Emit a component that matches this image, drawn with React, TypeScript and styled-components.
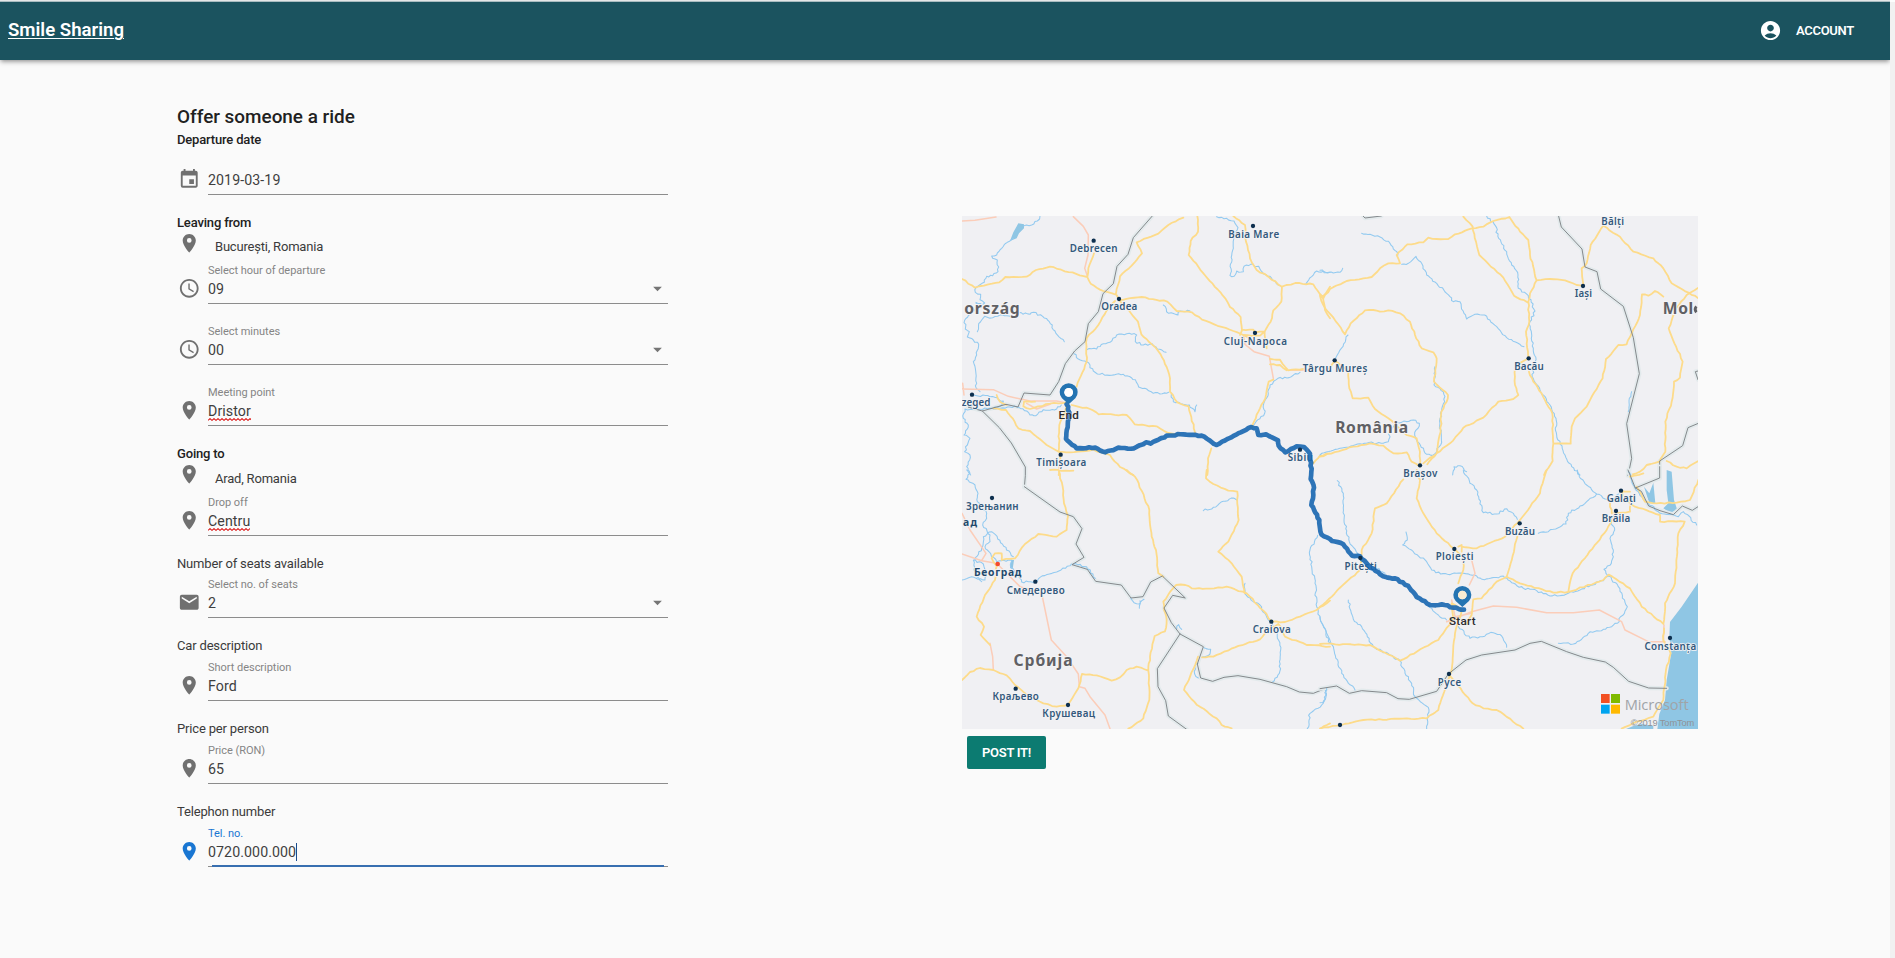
import React from "react";
import styled, { createGlobalStyle, css } from "styled-components";
import { MdAccessTime, MdAccountCircle, MdArrowDropDown, MdEmail, MdEvent, MdPlace } from "react-icons/md";

const GlobalStyle = createGlobalStyle`
  * { box-sizing: border-box; }
  body { margin: 0; background: #fafafa; font-family: Roboto, sans-serif; color: #212121; }
`;

const Page = styled.div`
  height: 958px;
  width: 1895px;
  overflow: hidden;
  display: grid;
  grid-template-columns: 1890px 5px;
`;
const Content = styled.div`
  display: flex;
  flex-direction: column;
`;
const ScrollGutter = styled.div`
  background: #f1f1f1;
  border-top: 2px solid #fdfdfd;
`;
const Header = styled.header`
  height: 60px;
  flex: none;
  border-top: 1px solid #e4e6e7;
  box-shadow: inset 0 1px #a9bcc0, 0 2px 4px -1px rgba(0, 0, 0, 0.35), 0 3px 5px rgba(0, 0, 0, 0.12);
  background: #1b535f;
  color: #fff;
  display: flex;
  align-items: center;
  justify-content: space-between;
  padding: 0 36px 1px 8px;
`;
const Brand = styled.a`
  font-size: 18.6px;
  font-weight: 600;
  text-decoration: underline;
  text-decoration-thickness: 1px;
  text-underline-offset: 2px;
`;
const Account = styled.div`
  display: flex;
  align-items: center;
  gap: 14px;
  font-size: 13px;
  font-weight: 600;
  letter-spacing: -0.3px;
`;
const Main = styled.main`
  display: flex;
  align-items: flex-start;
  padding: 45px 0 0 177px;
`;
const Form = styled.form`
  width: 491px;
  margin-right: 294px;
`;
const Title = styled.h1`
  margin: 0;
  font-size: 18.9px;
  line-height: 24px;
  height: 25px;
  font-weight: 500;
`;
const Section = styled.section`
  margin-bottom: 18px;
`;
const Heading = styled.h2<{ $strong?: boolean }>`
  margin: 0;
  font-size: 13px;
  line-height: 20px;
  font-weight: ${(p) => (p.$strong ? 500 : 400)};
  letter-spacing: -0.17px;
  color: ${(p) => (p.$strong ? "#212121" : "#3b3b3b")};
`;
const IconSlot = styled.span`
  width: 31px;
  flex: none;
  display: flex;
  padding-left: 1px;
  font-size: 22.5px;
  color: #707070;
`;
const Place = styled.div<{ $height: number }>`
  display: flex;
  height: ${(p) => p.$height}px;
  font-size: 13px;
  letter-spacing: -0.2px;
  color: #3b3b3b;
  ${IconSlot} { padding-top: 0; margin-top: -1px; }
`;
const PlaceName = styled.span<{ $height: number }>`
  padding-left: 7px;
  line-height: ${(p) => p.$height * 2 - 31}px;
`;
const FieldRow = styled.div<{ $gap?: number; $focused?: boolean }>`
  display: flex;
  height: 42px;
  margin-top: ${(p) => p.$gap ?? 0}px;
  ${IconSlot} {
    padding-top: 15px;
    ${(p) => p.$focused && css`color: #1976d2;`}
  }
`;
const FieldBody = styled.div<{ $focused?: boolean }>`
  flex: 1;
  position: relative;
  border-bottom: 1px solid #8c8c8c;
  ${(p) =>
    p.$focused &&
    css`
      &::after {
        content: "";
        position: absolute;
        left: 4px;
        right: 4px;
        bottom: -1px;
        height: 2px;
        background: #386fb0;
      }
    `}
`;
const FieldLabel = styled.div<{ $focused?: boolean }>`
  height: 16px;
  line-height: 18px;
  font-size: 11px;
  letter-spacing: -0.03px;
  color: ${(p) => (p.$focused ? "#1976d2" : "#858585")};
`;
const ValueRow = styled.div`
  height: 22px;
  display: flex;
  align-items: center;
  justify-content: space-between;
  font-size: 14.2px;
  letter-spacing: 0.08px;
  color: #3f3f3f;
`;
const Value = styled.span`
  position: relative;
  line-height: 18px;
`;
const Squiggle = styled.svg`
  position: absolute;
  left: 0;
  bottom: -1px;
  width: 100%;
  height: 3px;
`;
const Caret = styled.span`
  display: inline-block;
  width: 1px;
  height: 18px;
  background: #1a4c8c;
  vertical-align: top;
`;
const DropArrow = styled.span`
  display: flex;
  margin-top: -2px;
  font-size: 21px;
  color: #757575;
`;
const MapColumn = styled.div`
  width: 736px;
  padding-top: 111px;
`;
const MapSvg = styled.svg`
  display: block;
  width: 736px;
  height: 513px;
  background: #f0f0f3;
`;
const PostButton = styled.button`
  margin: 7px 0 0 5px;
  width: 79px;
  height: 33px;
  border: 0;
  border-radius: 2px;
  background: #0c7b71;
  color: #fff;
  font: 600 13px Roboto, sans-serif;
  letter-spacing: -0.25px;
  padding: 0;
`;

type FieldProps = {
  icon: React.ReactNode;
  label?: string;
  value: string;
  select?: boolean;
  misspelled?: boolean;
  focused?: boolean;
  gap?: number;
};
const zigzag = Array.from({ length: 60 }, (_, i) => `${i * 2},${i % 2 ? 0.6 : 2.4}`).join(" ");

function Field({ icon, label, value, select, misspelled, focused, gap }: FieldProps) {
  return (
    <FieldRow $gap={gap} $focused={focused}>
      <IconSlot>{icon}</IconSlot>
      <FieldBody $focused={focused}>
        <FieldLabel $focused={focused}>{label}</FieldLabel>
        <ValueRow>
          <Value>
            {value}
            {focused && <Caret />}
            {misspelled && (
              <Squiggle>
                <polyline points={zigzag} fill="none" stroke="#dd2222" strokeWidth="1.1" />
              </Squiggle>
            )}
          </Value>
          {select && <DropArrow><MdArrowDropDown /></DropArrow>}
        </ValueRow>
      </FieldBody>
    </FieldRow>
  );
}

/* Map geometry: three units per pixel, in four quadrants. */
type Quad = { dx: number; dy: number; rivers: string[]; roads: string[]; motorways: string[]; borders: string[]; water?: string[] };
const quads: Quad[] = [
  {
    dx: 0,
    dy: 0,
    water: ["M180 108L190 82L205 55L222 58L222 70L207 85L200 100Z"],
    rivers: [
      "M270 33L262 48L245 60L222 62M190 100L172 112L155 130L140 150L125 153L128 160L142 165L144 200L128 212L110 214L103 232L78 248L76 262L92 268L90 284L104 294L96 300L78 292L76 312L62 328L44 346L46 372L58 380L52 396L70 405L86 418L80 450L70 470L77 498L79 550L90 560",
      "M82 380L86 356L104 334L128 338L150 330L190 336L205 324L240 328L250 322L278 334L298 350L315 378L343 410",
      "M410 434L440 432L460 416L480 412L500 390L530 386L560 390L556 410L580 420L606 416L622 432L648 442",
      "M372 446L385 462L410 470L430 498L450 508L520 508L556 524L566 546L590 552L610 565L656 562M664 568L670 590L700 598L718 600L735 620L740 600",
      "M130 612L180 606L200 606L230 618L240 630L258 632L280 614L320 612L334 600",
      "M70 570L120 575L160 588L150 604L120 610L90 614L45 612L40 640L55 660L42 690L60 700L44 740L60 750L50 785L62 810",
      "M800 35L830 40L852 48L864 68L852 90L850 130L840 212L852 214L860 198L880 200L882 184L902 178L926 184L940 206L960 214L985 240",
      "M1068 236L1085 215L1100 198L1140 202",
      "M640 300L656 325L684 330L690 318L720 318",
      "M1050 502L1024 515L984 520L960 540L954 572L940 600L944 625L918 650L900 668",
    ],
    roads: [
      "M36 222L75 248L115 238L148 232L166 216L230 215L258 195L300 185L412 216L422 236L460 258L500 270L507 285L575 276L652 290L680 318L726 322L756 344L850 378L880 390L900 400",
      "M432 145L415 190L412 216",
      "M700 38L655 60L625 86L560 112L576 145L545 182L510 214L504 240L498 265",
      "M742 33L744 80L722 108L716 150L745 185L788 236L832 290L840 306L872 336L876 376L870 390",
      "M850 33L885 60L888 110L900 160L920 195L955 215L996 245L994 290L970 316L962 350L944 380L946 410L950 430",
      "M996 245L1036 234L1090 238L1118 275L1140 245M1118 275L1125 315L1140 340",
      "M876 374L910 374L915 382L944 380M880 390L930 392L944 380",
      "M495 288L470 316L445 360L410 400L410 470L380 545",
      "M507 285L544 326L564 350L574 388L606 418L632 448L650 486L660 520L660 560L682 592L716 604L724 636L735 682",
      "M365 600L420 612L446 628L530 630L554 658L620 664L655 684L690 690",
      "M350 592L300 596L240 612L220 604L222 590L255 590M350 602L328 660L326 740L333 748M330 748L326 810",
      "M130 610L168 615L188 640L205 670L240 678L290 720L326 740M326 740L360 742L430 734L480 750L510 786L550 810",
      "M960 462L990 464L1015 496L1060 492M960 478L990 480L1010 496M970 524L956 530L946 580L930 610L912 650L905 668",
      "M784 730L774 760L772 810M140 570L150 590L170 600",
      "M1090 775L1110 752L1140 745",
    ],
    motorways: ["M36 48L75 46L138 36M370 35L400 64L415 90L414 150L404 190L412 212", "M36 552L130 554L175 574L240 588L320 588L348 594M38 535L42 570M880 390L885 418L912 440L958 454L970 520", "M1020 496L1080 495M230 595L260 612L300 598"],
    borders: ["M606 34L550 98L534 148L501 184L490 236L459 266L445 320L415 356L405 410L374 438L346 476L326 530L300 570L222 564L204 606L168 598L97 618L54 606L70 600M97 618L148 668L184 714L226 786L226 812L223 847"],
  },
  {
    dx: 1110,
    dy: 0,
    rivers: [
      "M0 196L20 203L60 202L68 190M125 85L150 88L180 96L210 115L230 140L233 152",
      "M245 178L265 175L288 154L302 170L320 210L350 235L390 275L400 290L420 290L432 325L440 342L465 328L494 330L530 365L560 398L612 425",
      "M500 33L526 62L536 100L560 140L575 180L594 210L595 250L625 272L645 318L630 350L634 400L640 430L648 478L636 508L660 555L690 600L708 640L710 690L735 750",
      "M84 390L64 430L45 462M345 485L342 540L370 560L374 590L360 640L362 720L340 750L320 748L292 710L284 690L298 655L280 645L230 652L210 680L205 710L140 715L60 730L0 750",
      "M398 810L402 785L420 782L440 800M735 750L755 785L780 810",
      "M925 620L928 580L935 560",
    ],
    roads: [
      "M0 270L10 280L30 252L80 228L155 216L180 190L205 175L240 175L230 150L262 118L310 112L325 98L350 102L385 102L405 88L456 70L490 65L520 48L568 36L600 80L625 105L630 150L650 226L690 222L735 226L770 240L790 242",
      "M430 35L458 65L468 110L478 150L550 218L582 272L622 292M650 226L630 265L625 290L628 350L618 380L624 440L627 460",
      "M0 272L10 300L75 388L92 355L135 316L160 315L180 320L205 316L240 325L270 350L285 390L305 430L340 442L350 460L342 530L384 570L380 590L364 620L362 680L350 745L322 778",
      "M790 240L785 190L800 175L812 120L832 90L850 62L900 95L940 140L1000 160L1030 190L1055 235L1135 280M1135 248L1100 270L1068 310L1046 370L1088 470L1080 518L1062 530L1055 590L1036 650L1036 740L1018 770L980 780L960 800L938 808",
      "M1030 275L1005 258L985 272L966 268L960 330L920 418L895 420L858 462L848 520L800 605L765 640L755 665L752 716L700 716L698 768L672 810",
      "M627 500L640 530L665 565L697 625L700 716M622 462L592 478L585 490L585 540L595 570L580 582L535 590L490 638L430 668L390 715L350 745L310 775",
      "M32 485L45 468L85 500L88 550L98 580L145 578L165 612L205 640L260 690L290 700L300 740L300 780M0 755L100 725L150 715L190 722L220 745L260 742L275 770L300 785",
      "M1040 768L1070 785L1100 790L1135 768",
    ],
    motorways: ["M0 498L30 490"],
    borders: ["M130 34L135 39L184 33M716 34L724 66L786 132L795 186L831 200L842 252L910 304L940 398L958 506L920 656L935 760L924 812M1135 655L1104 668L1088 722L1019 768L1019 820M1134 498L1126 500L1134 524"],
  },
  {
    dx: 0,
    dy: 795,
    water: ["M184 270L192 270L188 298L180 294Z"],
    rivers: [
      "M50 0L60 10L48 28L75 45L84 70L82 95L110 130L110 145L98 165L120 195L120 215L105 230L112 240L140 275L175 270L186 270L182 292L210 325L215 336L255 336L270 322L320 306L365 282",
      "M36 330L65 320L105 330L110 310L100 282L70 270L72 300L80 320L95 335M75 270L95 235L100 200L125 185L190 260",
      "M370 282L410 290L436 325M542 384L552 398L568 402L582 388M570 392L568 415",
      "M680 476L686 464L695 478M762 533L782 538L780 552L758 560M744 580L734 590L734 612L745 624",
      "M760 122L790 112L820 94L850 84L860 90M885 340L884 370L910 395L930 405L945 430L962 455L982 490L992 540L988 610L968 636",
      "M1103 196L1080 240L1085 290L1095 340L1100 410L1116 460L1140 520M1126 656L1128 680L1115 705L1080 730L1072 776",
    ],
    roads: [
      "M325 0L338 50L342 100L354 138L350 180L320 200L265 192L225 222L195 265L155 270L155 250L135 250L125 265L140 288L135 330L105 375L80 440L102 470L92 495L120 525",
      "M130 600L90 594L60 606L36 630M130 600L170 616L195 645L225 670L280 700L320 710L354 704L385 655L396 612L440 616L485 632L510 622L530 600L560 590L595 602L600 560L614 498L645 484L650 450L642 420L640 395L678 345L706 345L725 355L780 356L830 350L890 370L940 422L965 455L1005 456L1050 440L1100 420L1140 392",
      "M530 0L555 20L575 62L598 120L605 200L618 240L625 310L640 320",
      "M770 0L768 25L790 42L835 62L862 65L866 150L835 215L805 245L845 280L875 320L884 370",
      "M756 562L790 560L855 532L930 508L950 480L985 462L1005 500L1070 525L1140 530",
      "M744 560L720 620L702 660L740 704L800 745L815 765L845 775M595 602L598 690L580 745L535 776M1112 776L1140 760",
      "M300 0L370 2",
    ],
    motorways: ["M36 252L95 272L130 278M36 130L60 180L108 250L95 272M145 285L210 350L275 370L304 510L350 560L385 612L388 650L405 655L420 680L465 735L480 776M120 520L128 560L130 600"],
    borders: ["M223 50L330 126L370 140L396 176L378 222L402 262L366 284L412 298L437 334L514 345L543 384L579 380L602 336L637 318L706 384L668 376L642 414L664 458L690 492L760 530L742 582L752 624L788 634L822 622L864 617L930 628L1010 650L1048 666L1090 670L1140 650M690 492L622 596L624 650L647 692L655 738L710 778"],
  },
  {
    dx: 1110,
    dy: 795,
    water: ["M1134 338L1085 410L1050 456L1048 500L1054 548L1040 630L1035 690L1018 732L1012 778H1134Z", "M972 50L988 70L1000 38L1006 100L988 100Z", "M1040 0L1055 5L1062 90L1072 120L1050 128L1030 115L1045 100L1040 60Z", "M916 778L940 768L965 762L1000 768V778Z"],
    rivers: [
      "M52 32L70 70L72 150L88 215L120 255M258 186L262 210L248 225L280 245L320 275L335 300L362 312L430 310L470 318L486 328L550 318L575 338L610 355L650 362L690 378L740 372",
      "M430 0L450 40L470 60L490 128L530 132L560 116L580 130L592 148M655 190L685 185L700 178L738 162L745 130L780 108L800 95L830 72L800 45L778 20L772 0M830 72L870 90L888 80L896 72M890 122L872 150L884 180L870 205L880 240L874 280L852 298L862 315",
      "M740 372L850 332L866 318L895 350L922 410L892 460L850 478L805 490L760 522L715 520",
      "M0 440L20 490L40 530L65 610L105 660M85 390L100 448L125 470L160 530L240 572L255 610L275 640L285 680L325 712L320 776M0 698L12 695L20 655",
      "M145 280L195 310M325 405L355 435L380 450M415 470L450 505L480 500L520 488L545 498L560 532",
      "M925 5L945 55L985 100L1020 130L1075 140L1090 125L1130 165",
    ],
    roads: [
      "M290 0L300 30L290 85L310 130L350 190L400 235L430 260L430 300L415 340M680 0L668 40L660 70L600 150L555 200L470 235L425 230M592 200L572 280L560 320L530 335L485 385L460 388L455 435L440 460",
      "M250 28L200 100L165 115L155 190L125 240L120 300L0 410",
      "M560 320L600 340L700 368L745 366L850 330L866 314L930 355L965 410L1030 462L1035 400L1065 340L1075 190L1094 155L1020 155L1020 135L945 110L912 85L905 64L930 65",
      "M888 130L860 180L758 310L745 365M870 100L875 130L930 125L935 80",
      "M0 522L150 525L240 572L355 510L400 445L395 400L425 420L405 490L395 600L355 720L320 745L130 750L65 765L0 775",
      "M385 612L458 700L490 715L530 720L610 776",
      "M1032 475L1030 510L1052 550L1038 600L1030 690L1000 740L950 755L905 776",
      "M950 50L975 95L1010 100L1070 98L1110 90L1135 30M930 20L970 10",
      "M415 230L425 225L425 245",
    ],
    motorways: ["M455 270L465 310L448 345M380 455L455 425L520 408L590 412L680 428L760 428L838 420L905 455L915 480L985 515L1035 515M1032 465L1030 515M395 390L405 440L455 430"],
    borders: ["M924 0L946 54L1019 24V-10M946 54L964 64L986 108L1020 122L1060 134L1087 108L1117 121L1134 110M0 656L50 648L88 670L125 662L200 668L234 686L268 688L350 664L385 612L438 570L485 555L585 540L630 520L664 514L740 545L790 562L856 576L880 592L926 634L986 654L1040 655"],
  },
];

const route =
  "M350 598L358 622L348 702L380 730L436 728L466 742L505 728L552 730L588 712L602 716L650 692L700 688L755 692L800 720L842 698L872 682L904 666L920 670L925 690L948 688L984 706L986 722L1006 742L1040 724L1062 726L1080 746L1084 800L1082 822L1092 848L1090 870L1084 900L1108 945L1114 988L1146 1008L1180 1018L1206 1052L1230 1054L1256 1082L1290 1108L1310 1117L1334 1120L1374 1142L1400 1176L1440 1200L1484 1200L1510 1208L1542 1214";

/* Subdivides each straight run and shifts the new points sideways, so lines meander. */
function meander(d: string, step: number, amount: number) {
  let seed = 7;
  const rand = () => {
    seed = (seed * 16807) % 2147483647;
    return seed / 2147483647 - 0.5;
  };
  return d
    .split("M")
    .filter(Boolean)
    .map((run) => {
      const pts = run.split("L").map((p) => p.split(" ").map(Number));
      let out = `M${pts[0].join(" ")}`;
      for (let i = 1; i < pts.length; i++) {
        const [ax, ay] = pts[i - 1];
        const [bx, by] = pts[i];
        const len = Math.hypot(bx - ax, by - ay) || 1;
        const n = Math.max(1, Math.round(len / step));
        for (let k = 1; k < n; k++) {
          const off = rand() * amount * 2;
          const x = ax + ((bx - ax) * k) / n - ((by - ay) / len) * off;
          const y = ay + ((by - ay) * k) / n + ((bx - ax) / len) * off;
          out += `L${x.toFixed(1)} ${y.toFixed(1)}`;
        }
        out += `L${bx} ${by}`;
      }
      return out;
    })
    .join("");
}

type City = [name: string, x: number, y: number, width: number, dotX?: number, dotY?: number];
const cities: City[] = [
  ["Debrecen", 431, 142, 143, 431, 107],
  ["Baia Mare", 911, 98, 153, 909, 63],
  ["Oradea", 508, 315, 108, 507, 282],
  ["Cluj-Napoca", 916, 419, 190, 915, 384],
  ["Târgu Mureș", 1155, 501, 194, 1154, 466],
  ["Timișoara", 334, 783, 150, 332, 749],
  ["Sibiu", 1051, 767, 76, 1050, 734],
  ["zeged", 78, 604, 86, 66, 569],
  ["Bălți", 1988, 59, 69],
  ["Iași", 1900, 277, 52, 1899, 243],
  ["Bacău", 1737, 495, 88, 1736, 460],
  ["Brașov", 1411, 816, 102, 1410, 781],
  ["Galați", 2014, 892, 87, 2013, 857],
  ["Brăila", 1998, 952, 86, 1998, 918],
  ["Buzău", 1710, 990, 90, 1709, 955],
  ["Ploiești", 1514, 1066, 114, 1513, 1032],
  ["Pitești", 1232, 1094, 97, 1231, 1059],
  ["Craiova", 965, 1285, 114, 964, 1250],
  ["Constanța", 2161, 1334, 155, 2160, 1299],
  ["Русе", 1498, 1443, 70, 1497, 1407],
  ["Зрењанин", 127, 915, 158, 126, 879],
  ["Смедерево", 257, 1166, 174, 256, 1130],
  ["Краљево", 197, 1486, 139, 197, 1451],
  ["Крушевац", 356, 1536, 158, 354, 1500],
];
const countries: [string, number, number, number][] = [
  ["ország", 126, 326, 166],
  ["România", 1265, 684, 219],
  ["Mol", 2184, 326, 91],
  ["Србија", 279, 1382, 177],
];

const CityText = styled.text`
  font: 600 29.5px "Noto Sans", sans-serif;
  fill: #34597c;
  text-anchor: middle;
  paint-order: stroke;
  stroke: #f3f3f5;
  stroke-width: 5px;
`;
const CapitalText = styled(CityText)`
  font-weight: 700;
  font-size: 31px;
  fill: #234a6d;
`;
const CountryText = styled.text`
  font: 700 47px "Noto Sans", sans-serif;
  fill: #606064;
  text-anchor: middle;
  paint-order: stroke;
  stroke: #f4f4f6;
  stroke-width: 6px;
`;
const PinText = styled.text`
  font: 500 35px Roboto, sans-serif;
  fill: #2b2b2f;
  text-anchor: middle;
  paint-order: stroke;
  stroke: rgba(245, 245, 247, 0.4);
  stroke-width: 4px;
`;

function Pin({ x, y, fill }: { x: number; y: number; fill: string }) {
  return (
    <g transform={`translate(${x} ${y})`}>
      <path d="M0 36L-20 18A27 27 0 1 1 20 18Z M0 -13A13 13 0 1 0 0 13A13 13 0 1 0 0 -13Z" fill="#2474b2" fillRule="evenodd" />
      <circle r="13" fill={fill} />
    </g>
  );
}

function RouteMap() {
  return (
    <MapSvg viewBox="36 33 2208 1539" preserveAspectRatio="none">
      <g fill="none" strokeLinejoin="round" strokeLinecap="round">
        {quads.map((q, i) => (
          <g key={i} transform={`translate(${q.dx} ${q.dy})`}>
            {q.water?.map((d) => <path key={d} d={d} fill="#8fc6e4" />)}
            <path d={q.borders.join("")} stroke="#e3eaec" strokeWidth="13" />
            <path d={meander(q.rivers.join(""), 7, 3.2)} stroke="#93caf0" strokeWidth="3.2" />
            <path d={q.motorways.join("")} stroke="#fbcdb9" strokeWidth="4.6" />
            <path d={meander(q.roads.join(""), 12, 1.8)} stroke="#fddb8a" strokeWidth="5.4" />
            <path d={q.borders.join("")} stroke="#7d8184" strokeWidth="2.8" />
          </g>
        ))}
      </g>
      {countries.map(([name, x, y, w]) => (
        <CountryText key={name} x={x} y={y} textLength={w}>{name}</CountryText>
      ))}
      <path d="M2239 304A14 14 0 0 0 2239 322" fill="none" stroke="#606064" strokeWidth="8" />
      {cities.map(([name, x, y, w]) => (
        <CityText key={name} x={x} y={y} textLength={w}>{name}</CityText>
      ))}
      <CapitalText x="143" y="1114" textLength="142">Београд</CapitalText>
      <CapitalText x="60" y="962" textLength="42">ад</CapitalText>
      <path d={meander(route, 9, 2)} fill="none" stroke="#1766b0" strokeOpacity="0.9" strokeWidth="14" strokeLinejoin="round" strokeLinecap="round" />
      {cities.map(([name, , , , x, y]) => x !== undefined && <circle key={name} cx={x} cy={y} r="6.5" fill="#0d2f4e" />)}
      <circle cx="1170" cy="1560" r="6.5" fill="#0d2f4e" />
      <circle cx="143" cy="1077" r="7" fill="#f4492d" />
      <Pin x={356} y={562} fill="#fff" />
      <Pin x={1537} y={1170} fill="#f8ecd2" />
      <PinText x="356" y="643" textLength="61">End</PinText>
      <PinText x="1537" y="1260" textLength="80">Start</PinText>
      <path d="M1953 1467H1979V1494H1953Z" fill="#f25022" />
      <path d="M1983 1467H2010V1494H1983Z" fill="#7fba00" />
      <path d="M1953 1499H1979V1526H1953Z" fill="#00a4ef" />
      <path d="M1983 1499H2010V1526H1983Z" fill="#ffb900" />
      <text x="2024" y="1514" textLength="192" fontFamily="Open Sans, sans-serif" fontSize="44" fontWeight="500" fill="#a0a4a8">Microsoft</text>
      <text x="2042" y="1562" textLength="191" fontFamily="Liberation Sans, sans-serif" fontSize="28" fill="#8f9398">©2019 TomTom</text>
    </MapSvg>
  );
}

export default function App() {
  return (
    <Page>
      <GlobalStyle />
      <Content>
        <Header>
          <Brand>Smile Sharing</Brand>
          <Account><MdAccountCircle size={23} />ACCOUNT</Account>
        </Header>
        <Main>
          <Form>
            <Title>Offer someone a ride</Title>
            <Section>
              <Heading $strong>Departure date</Heading>
              <Field icon={<MdEvent />} value="2019-03-19" gap={3} />
            </Section>
            <Section>
              <Heading $strong>Leaving from</Heading>
              <Place $height={29}><IconSlot><MdPlace /></IconSlot><PlaceName $height={29}>București, Romania</PlaceName></Place>
              <Field icon={<MdAccessTime />} label="Select hour of departure" value="09" select />
              <Field icon={<MdAccessTime />} label="Select minutes" value="00" select gap={19} />
              <Field icon={<MdPlace />} label="Meeting point" value="Dristor" misspelled gap={19} />
            </Section>
            <Section>
              <Heading $strong>Going to</Heading>
              <Place $height={30}><IconSlot><MdPlace /></IconSlot><PlaceName $height={30}>Arad, Romania</PlaceName></Place>
              <Field icon={<MdPlace />} label="Drop off" value="Centru" misspelled />
            </Section>
            <Section>
              <Heading>Number of seats available</Heading>
              <Field icon={<MdEmail />} label="Select no. of seats" value="2" select gap={2} />
            </Section>
            <Section>
              <Heading>Car description</Heading>
              <Field icon={<MdPlace />} label="Short description" value="Ford" gap={3} />
            </Section>
            <Section>
              <Heading>Price per person</Heading>
              <Field icon={<MdPlace />} label="Price (RON)" value="65" gap={3} />
            </Section>
            <Section>
              <Heading>Telephon number</Heading>
              <Field icon={<MdPlace />} label="Tel. no." value="0720.000.000" focused gap={3} />
            </Section>
          </Form>
          <MapColumn>
            <RouteMap />
            <PostButton type="button">POST IT!</PostButton>
          </MapColumn>
        </Main>
      </Content>
      <ScrollGutter />
    </Page>
  );
}
